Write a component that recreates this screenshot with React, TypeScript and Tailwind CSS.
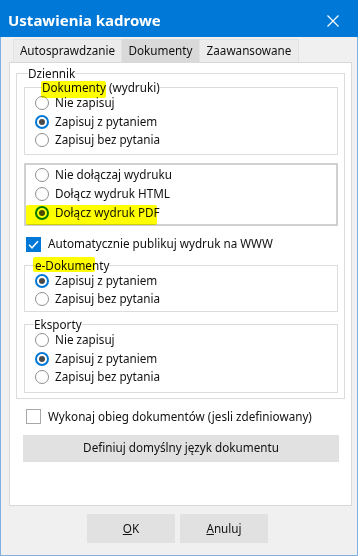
import React from 'react';

const Radio = ({ checked }: { checked?: boolean }) =>
    checked ? (
        <span className="w-[14px] h-[14px] rounded-full border-2 border-[#0078d7] bg-white flex items-center justify-center shrink-0">
            <span className="w-[6px] h-[6px] rounded-full bg-[#4a4a4a]" />
        </span>
    ) : (
        <span className="w-[14px] h-[14px] rounded-full border border-[#8f8f8f] bg-white shrink-0" />
    );

const RadioRow = ({ label, checked, h = 'h-[18px]' }: { label: string; checked?: boolean; h?: string }) => (
    <div className={`flex items-center gap-[6px] pl-[10px] ${h}`}>
        <Radio checked={checked} />
        <span>{label}</span>
    </div>
);

// marker highlight drawn over the content
const Marker = ({ className }: { className: string }) => (
    <span className={`absolute bg-[#ffff00] mix-blend-multiply rounded-[2px] pointer-events-none ${className}`} />
);

export default function App() {
    return (
        <div className="w-[360px] h-[556px] bg-white font-['Noto_Sans',sans-serif] text-[11.7px] text-[#111] leading-none">
            <div className="w-[358px] h-[556px] bg-[#f0f0f0] border-l border-r border-b border-[#7fb0e0] flex flex-col">
                {/* title bar */}
                <div className="h-[37px] -ml-px -mr-px bg-[#0078d7] flex items-center justify-between pl-[8px] pr-[19px] pt-[4px]">
                    <span className="text-white font-bold text-[15px]">Ustawienia kadrowe</span>
                    <svg width="12" height="12" viewBox="0 0 12 12">
                        <path d="M0.5 0.5 L11.5 11.5 M11.5 0.5 L0.5 11.5" stroke="white" strokeWidth="1.2" />
                    </svg>
                </div>

                {/* tabs */}
                <div className="mt-[2px] h-[23px] flex pl-[12px]">
                    <div className="w-[109px] bg-[#ececec] border border-b-0 border-[#e2e2e2] flex items-center justify-center">Autosprawdzanie</div>
                    <div className="w-[77px] bg-[#d9d9d9] flex items-center justify-center">Dokumenty</div>
                    <div className="w-[100px] bg-[#ececec] border border-b-0 border-[#e2e2e2] flex items-center justify-center">Zaawansowane</div>
                </div>

                {/* tab panel */}
                <div className="ml-[8px] w-[343px] h-[444px] bg-white border border-[#d9d9d9] pt-[3px] flex flex-col">
                    <fieldset className="ml-[6px] w-[329px] border border-[#dcdcdc] pb-[5px]">
                        <legend className="ml-[11px] leading-[14px]">Dziennik</legend>

                        <fieldset className="ml-[7px] mr-[6px] border border-[#dcdcdc] pb-[4px]">
                            <legend className="ml-[17px] leading-[14px]">
                                <span className="relative">
                                    Dokumenty
                                    <Marker className="-left-[1px] right-0 top-[2px] -bottom-[3px]" />
                                </span>
                                <span className="ml-[3px]">(wydruki)</span>
                            </legend>
                            <RadioRow label="Nie zapisuj" h="h-[18.5px]" />
                            <RadioRow label="Zapisuj z pytaniem" checked h="h-[18.5px]" />
                            <RadioRow label="Zapisuj bez pytania" h="h-[18.5px]" />
                        </fieldset>

                        <div className="mt-[8.5px] ml-[7px] mr-[6px] border-2 border-[#d0d0d0] pb-[2px]">
                            <div className="-ml-px">
                                <RadioRow label="Nie dołączaj wydruku" h="h-[19px]" />
                                <RadioRow label="Dołącz wydruk HTML" h="h-[19px]" />
                                <div className="relative">
                                    <RadioRow label="Dołącz wydruk PDF" checked h="h-[19px]" />
                                    <Marker className="left-[1px] w-[131px] top-[2px] h-[20px]" />
                                </div>
                            </div>
                        </div>

                        <div className="mt-[9px] h-[18px] pl-[9px] flex items-center gap-[7px]">
                            <span className="w-[15px] h-[15px] bg-[#0078d7] flex items-center justify-center shrink-0">
                                <svg width="13" height="13" viewBox="0 0 13 13">
                                    <path d="M2 6.8 L5 9.8 L11 3.2" stroke="white" strokeWidth="1.5" fill="none" />
                                </svg>
                            </span>
                            <span>Automatycznie publikuj wydruk na WWW</span>
                        </div>

                        <fieldset className="mt-[5px] ml-[7px] mr-[6px] border border-[#dcdcdc] pb-[3px]">
                            <legend className="ml-[10px] leading-[14px] relative">
                                e-Dokumenty
                                <Marker className="-left-[2px] w-[62px] -top-[1px] h-[15px]" />
                            </legend>
                            <RadioRow label="Zapisuj z pytaniem" checked />
                            <RadioRow label="Zapisuj bez pytania" />
                        </fieldset>

                        <fieldset className="mt-[5px] ml-[7px] mr-[6px] border border-[#dcdcdc] pb-[5px]">
                            <legend className="ml-[9px] leading-[14px]">Eksporty</legend>
                            <RadioRow label="Nie zapisuj" h="h-[18.5px]" />
                            <RadioRow label="Zapisuj z pytaniem" checked h="h-[18.5px]" />
                            <RadioRow label="Zapisuj bez pytania" h="h-[18.5px]" />
                        </fieldset>
                    </fieldset>

                    <div className="mt-[9px] h-[18px] ml-[16px] flex items-center gap-[7px]">
                        <span className="w-[15px] h-[15px] border border-[#a8a8a8] bg-white shrink-0" />
                        <span>Wykonaj obieg dokumentów (jesli zdefiniowany)</span>
                    </div>

                    <button className="mt-[9px] ml-[13px] w-[316px] h-[27px] bg-[#e1e1e1] flex items-center justify-center">
                        Definiuj domyślny język dokumentu
                    </button>
                </div>

                {/* dialog buttons */}
                <div className="mt-[8px] ml-[86px] flex gap-[5px]">
                    <button className="w-[88px] h-[29px] bg-[#e1e1e1] flex items-center justify-center">
                        <span><span className="underline">O</span>K</span>
                    </button>
                    <button className="w-[88px] h-[29px] bg-[#e1e1e1] flex items-center justify-center">
                        <span><span className="underline">A</span>nuluj</span>
                    </button>
                </div>
            </div>
        </div>
    );
}
